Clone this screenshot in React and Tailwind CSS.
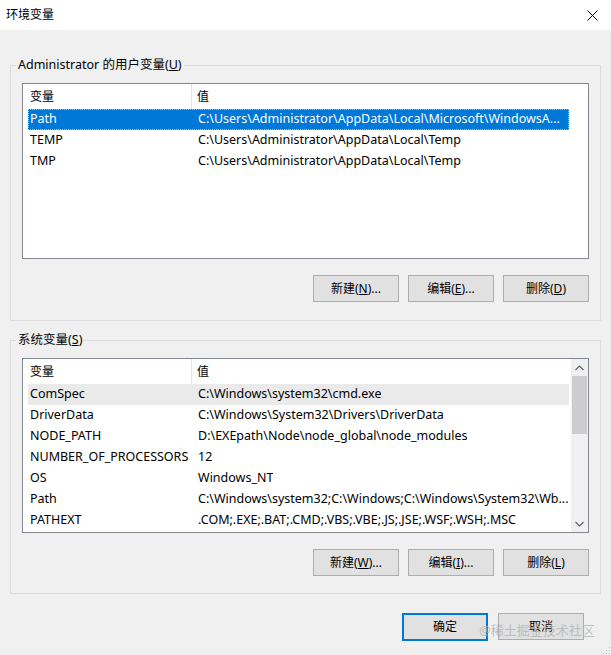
import React from "react";

const font = { fontFamily: '"Noto Sans", "Noto Sans CJK SC", sans-serif' };

function Btn({ children, primary }) {
  return (
    <div
      className={
        "w-[86px] flex items-center justify-center bg-[#e1e1e1] text-[12px] text-black " +
        (primary ? "border-2 border-[#0078d7] h-[28px]" : "border border-[#adadad] h-[27px]")
      }
    >
      {children}
    </div>
  );
}

function Header() {
  return (
    <div className="flex h-[25px] items-center text-[12px] text-black">
      <div className="w-[169px] pl-[7px] h-full flex items-center border-r border-[#e5e5e5]">变量</div>
      <div className="pl-[5px] h-full flex items-center">值</div>
    </div>
  );
}

function Row({ name, value, state }) {
  const cls =
    state === "sel"
      ? "bg-[#0078d7] text-white outline outline-1 outline-dotted outline-[#99c9ef] -outline-offset-1"
      : state === "hover"
      ? "bg-[#eaeaea] text-black"
      : "text-black";
  return (
    <div className={"flex h-[21px] items-center text-[12.5px] w-[541px] " + cls}>
      <div className="w-[164px] pl-[2px] whitespace-nowrap overflow-hidden">{name}</div>
      <div className="pl-[6px] whitespace-nowrap overflow-hidden">{value}</div>
    </div>
  );
}

export default function App() {
  return (
    <div className="w-[611px] h-[655px] bg-[#f0f0f0] relative overflow-hidden" style={font}>
      {/* title bar */}
      <div className="h-[30px] bg-white flex items-center justify-between pl-[6px] pr-[13px]">
        <span className="text-[12px] text-black">环境变量</span>
        <svg width="11" height="11" viewBox="0 0 11 11">
          <path d="M0.5 0.5 L10.5 10.5 M10.5 0.5 L0.5 10.5" stroke="#000" strokeWidth="1" />
        </svg>
      </div>

      <div className="px-[10px] pt-[26px]">
        {/* user vars */}
        <fieldset className="border border-[#dcdcdc] w-[591px] h-[265px] px-[11px]">
          <legend className="-ml-[6px] px-[2px] text-[12.5px] leading-[18px] text-black">
            Administrator 的用户变量(<span className="underline">U</span>)
          </legend>
          <div className="mt-[9px] h-[176px] border border-[#828790] bg-white">
            <Header />
            <div className="pl-[5px]">
              <Row
                name="Path"
                value="C:\Users\Administrator\AppData\Local\Microsoft\WindowsA..."
                state="sel"
              />
              <Row name="TEMP" value="C:\Users\Administrator\AppData\Local\Temp" />
              <Row name="TMP" value="C:\Users\Administrator\AppData\Local\Temp" />
            </div>
          </div>
          <div className="flex justify-end gap-[9px] mt-[16px]">
            <Btn>
              新建(<span className="underline">N</span>)...
            </Btn>
            <Btn>
              编辑(<span className="underline">E</span>)...
            </Btn>
            <Btn>
              删除(<span className="underline">D</span>)
            </Btn>
          </div>
        </fieldset>

        {/* system vars */}
        <fieldset className="border border-[#dcdcdc] w-[591px] h-[263px] px-[11px] mt-[10px]">
          <legend className="-ml-[6px] px-[2px] text-[12.5px] leading-[18px] text-black">
            系统变量(<span className="underline">S</span>)
          </legend>
          <div className="mt-[9px] h-[175px] border border-[#828790] bg-white flex">
            <div className="flex-1">
              <Header />
              <div className="pl-[5px]">
                <Row name="ComSpec" value="C:\Windows\system32\cmd.exe" state="hover" />
                <Row name="DriverData" value="C:\Windows\System32\Drivers\DriverData" />
                <Row name="NODE_PATH" value="D:\EXEpath\Node\node_global\node_modules" />
                <Row name="NUMBER_OF_PROCESSORS" value="12" />
                <Row name="OS" value="Windows_NT" />
                <Row
                  name="Path"
                  value="C:\Windows\system32;C:\Windows;C:\Windows\System32\Wb..."
                />
                <Row name="PATHEXT" value=".COM;.EXE;.BAT;.CMD;.VBS;.VBE;.JS;.JSE;.WSF;.WSH;.MSC" />
              </div>
            </div>
            <div className="w-[17px] bg-[#f0f0f0] flex flex-col items-center">
              <div className="h-[17px] flex items-center justify-center">
                <svg width="9" height="6" viewBox="0 0 9 6">
                  <path d="M0.5 5 L4.5 1 L8.5 5" stroke="#606060" strokeWidth="1.2" fill="none" />
                </svg>
              </div>
              <div className="w-[15px] h-[58px] bg-[#cdcdcd]" />
              <div className="flex-1" />
              <div className="h-[17px] flex items-center justify-center">
                <svg width="9" height="6" viewBox="0 0 9 6">
                  <path d="M0.5 1 L4.5 5 L8.5 1" stroke="#606060" strokeWidth="1.2" fill="none" />
                </svg>
              </div>
            </div>
          </div>
          <div className="flex justify-end gap-[9px] mt-[16px]">
            <Btn>
              新建(<span className="underline">W</span>)...
            </Btn>
            <Btn>
              编辑(<span className="underline">I</span>)...
            </Btn>
            <Btn>
              删除(<span className="underline">L</span>)
            </Btn>
          </div>
        </fieldset>

        <div className="flex justify-end gap-[10px] mt-[19px] pr-[17px]">
          <Btn primary>确定</Btn>
          <Btn>取消</Btn>
        </div>
      </div>

      <div className="absolute left-[479px] top-[621px] text-[13px] text-[#b4b4b4] opacity-80 whitespace-nowrap">
        @稀土掘金技术社区
      </div>
      <svg className="absolute right-0 bottom-0" width="8" height="8" viewBox="0 0 8 8">
        <rect x="6" y="0" width="1" height="1" fill="#bcbcbc" />
        <rect x="3" y="3" width="1" height="1" fill="#bcbcbc" />
        <rect x="6" y="3" width="1" height="1" fill="#bcbcbc" />
        <rect x="0" y="6" width="1" height="1" fill="#bcbcbc" />
        <rect x="3" y="6" width="1" height="1" fill="#bcbcbc" />
        <rect x="6" y="6" width="1" height="1" fill="#bcbcbc" />
      </svg>
    </div>
  );
}
